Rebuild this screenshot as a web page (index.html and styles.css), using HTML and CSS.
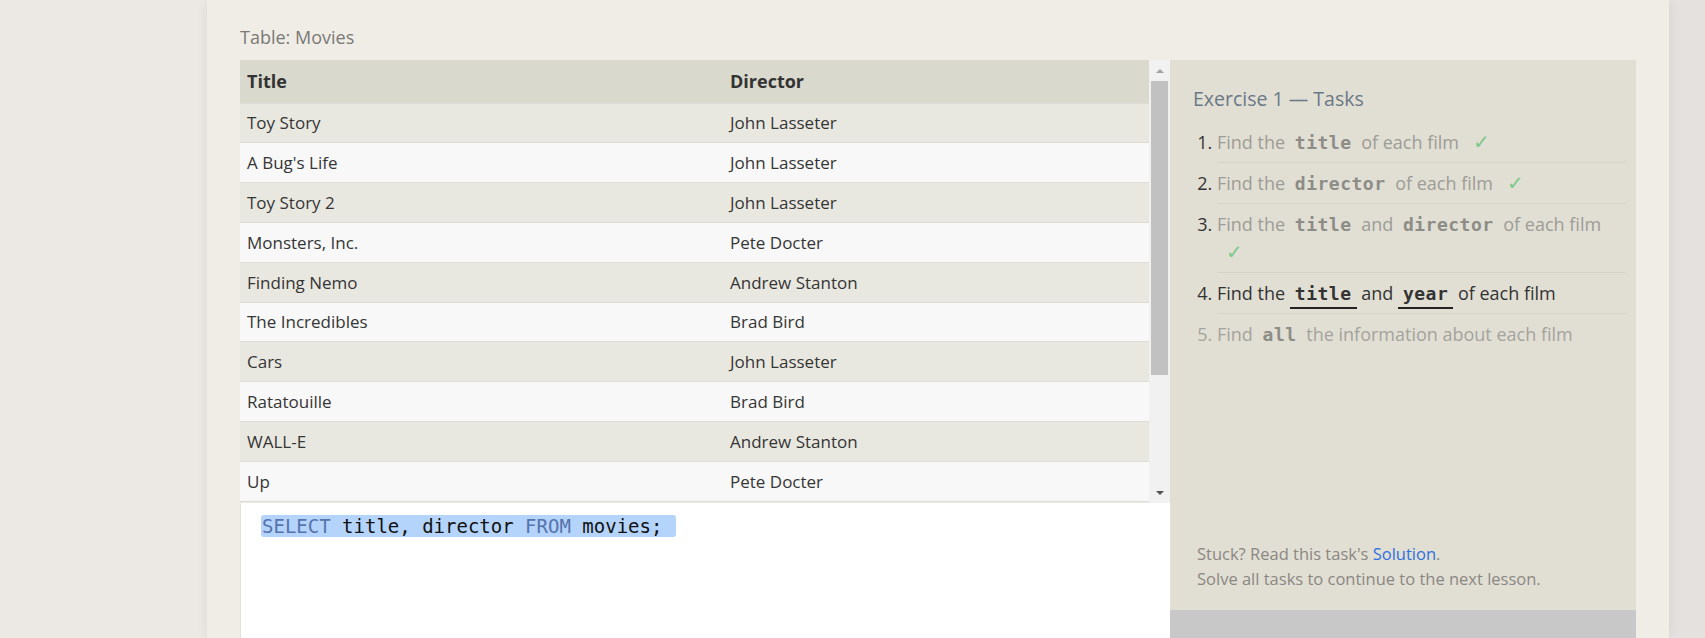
FILE: index.html
```html
<!DOCTYPE html>
<html lang="en">
<head>
<meta charset="utf-8">
<title>SQL Lesson 1</title>
<link rel="stylesheet" href="styles.css">
</head>
<body>
<div class="page">
  <div class="gutter-left"></div>
  <main class="panel">
    <div class="caption">Table: Movies</div>
    <div class="exercise">
      <div class="left">
        <div class="table-view">
          <div class="table">
            <div class="row head"><div>Title</div><div>Director</div></div>
            <div class="row"><div>Toy Story</div><div>John Lasseter</div></div>
            <div class="row"><div>A Bug's Life</div><div>John Lasseter</div></div>
            <div class="row"><div>Toy Story 2</div><div>John Lasseter</div></div>
            <div class="row"><div>Monsters, Inc.</div><div>Pete Docter</div></div>
            <div class="row"><div>Finding Nemo</div><div>Andrew Stanton</div></div>
            <div class="row"><div>The Incredibles</div><div>Brad Bird</div></div>
            <div class="row"><div>Cars</div><div>John Lasseter</div></div>
            <div class="row"><div>Ratatouille</div><div>Brad Bird</div></div>
            <div class="row"><div>WALL-E</div><div>Andrew Stanton</div></div>
            <div class="row"><div>Up</div><div>Pete Docter</div></div>
          </div>
          <div class="scrollbar">
            <div class="arrow up"></div>
            <div class="track"><div class="thumb"></div></div>
            <div class="arrow down"></div>
          </div>
        </div>
        <div class="editor"><span class="sel"><span class="kw">SELECT</span> title, director <span class="kw">FROM</span> movies;</span></div>
      </div>
      <aside class="tasks">
        <div class="tasks-body">
          <h2 class="tasks-title">Exercise 1 — Tasks</h2>
          <ol class="task-list">
            <li class="done">Find the <code>title</code> of each film <span class="check">✓</span></li>
            <li class="done">Find the <code>director</code> of each film <span class="check">✓</span></li>
            <li class="done">Find the <code>title</code> and <code>director</code> of each film <span class="check">✓</span></li>
            <li class="current">Find the <code>title</code> and <code>year</code> of each film</li>
            <li class="todo">Find <code>all</code> the information about each film</li>
          </ol>
          <div class="help">
            <div>Stuck? Read this task's <a href="#" class="link">Solution</a>.</div>
            <div>Solve all tasks to continue to the next lesson.</div>
          </div>
        </div>
        <div class="tasks-footer"></div>
      </aside>
    </div>
  </main>
  <div class="gutter-right"></div>
</div>
</body>
</html>
```
FILE: styles.css
```css
* { box-sizing: border-box; }
html, body { margin: 0; padding: 0; }
body {
  font-family: "Open Sans", "Noto Sans", sans-serif;
  background: #e5e1de;
  overflow: hidden;
}
.page { display: flex; height: 638px; overflow: hidden; }
.gutter-left { width: 207px; flex: none; background: #ece9e5; }
.gutter-right { flex: 1; background: #e5e1de; }
.panel {
  width: 1462px;
  flex: none;
  background: #f0ede6;
  padding: 24px 33px 0;
  box-shadow: 0 0 12px rgba(0, 0, 0, 0.07);
  position: relative;
  z-index: 1;
}
.caption {
  font-size: 18px;
  line-height: 26px;
  color: #7a7976;
  margin-bottom: 10px;
}
.exercise { display: flex; }
.left { width: 930px; flex: none; display: flex; flex-direction: column; }
.table-view { display: flex; height: 443px; background: #ebeae4; }
.table { width: 909px; border-bottom: 1px solid #dedcd4; align-self: flex-start; }
.row {
  display: grid;
  grid-template-columns: 483px 1fr;
  align-items: center;
  height: 39.8px;
  border-top: 1px solid #dedcd4;
  font-size: 17px;
  color: #353535;
}
.row > div { padding: 0 7px; }
.row:nth-child(even) { background: #e9e8e0; }
.row:nth-child(odd) { background: #f8f8f8; }
.row.head {
  height: 42.6px;
  border-top: 0;
  background: #dad9cd;
  font-weight: 700;
  font-size: 18px;
  color: #333;
}
.scrollbar {
  width: 21px;
  flex: none;
  background: #f1f1f1;
  display: flex;
  flex-direction: column;
}
.arrow { height: 21px; display: flex; align-items: center; justify-content: center; }
.arrow::before { content: ""; width: 0; height: 0; border-left: 4px solid transparent; border-right: 4px solid transparent; }
.arrow.up::before { border-bottom: 4px solid #a3a3a3; }
.arrow.down::before { border-top: 4px solid #505050; }
.track { flex: 1; padding: 0 2px; }
.thumb { height: 294px; background: #c1c1c1; }
.editor {
  height: 160px;
  background: #fff;
  border-left: 1px solid #e4e2dc;
  padding: 12px 20px;
  font-family: "DejaVu Sans Mono", monospace;
  font-size: 19px;
  line-height: 23px;
  color: #111;
}
.sel { background: #b4d4fb; border-radius: 3px; padding: 0 14px 0 1px; }
.kw { color: #5673ac; }
.tasks { width: 466px; flex: none; display: flex; flex-direction: column; }
.tasks-body {
  height: 550px;
  background: #e1dfd4;
  padding: 26px 10px 19px 23px;
  display: flex;
  flex-direction: column;
}
.tasks-title {
  margin: 0 0 10px;
  font-size: 19.5px;
  font-weight: 400;
  line-height: 26px;
  color: #6a7886;
}
.task-list { margin: 0; padding-left: 24px; }
.task-list li {
  padding: 6px 0;
  line-height: 28px;
  font-size: 18px;
  border-bottom: 1px solid #d6d4c9;
}
.task-list li:last-child { border-bottom: 0; }
.task-list li::marker { color: #333; }
.task-list code {
  font-family: "DejaVu Sans Mono", monospace;
  font-weight: 700;
  font-size: 18px;
  line-height: 1;
  letter-spacing: 0.5px;
  padding: 0 5px;
}
.done { color: #9d9c96; }
.done code { color: #8d8c87; }
.current { color: #333; }
.current code { color: #333; border-bottom: 2px solid #222; padding-bottom: 3px; }
.todo { color: #a4a39d; }
.todo code { color: #8d8c87; }
.task-list li.todo::marker { color: #a4a39d; }
.check { color: #7fc98b; margin-left: 9px; font-size: 20px; line-height: 1; }
.help {
  margin-top: auto;
  padding-left: 4px;
  font-size: 16.5px;
  line-height: 25px;
  color: #8b8782;
}
.link { color: #2f6fdf; text-decoration: none; }
.tasks-footer { height: 40px; background: #c8c8c8; }
```
